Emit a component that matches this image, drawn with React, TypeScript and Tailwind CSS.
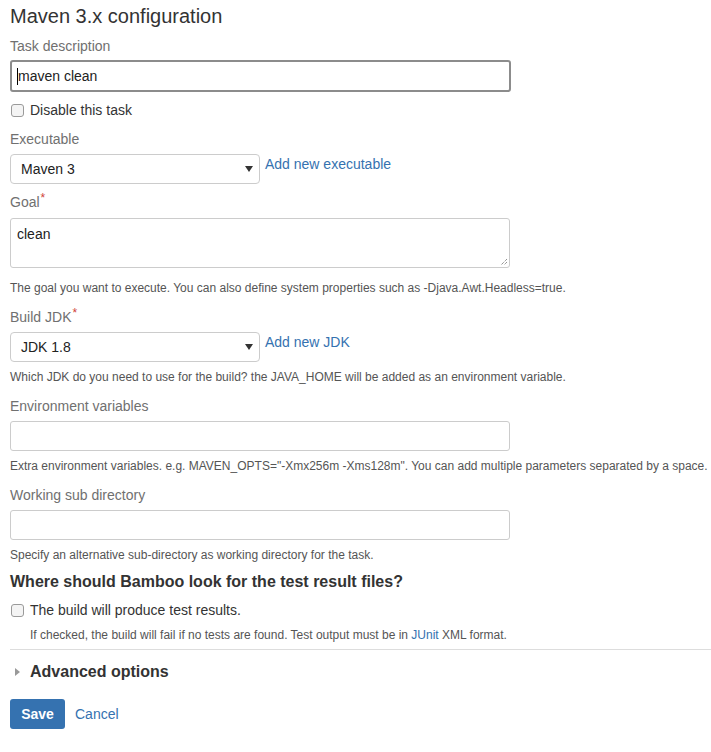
import React from "react";

const FONT = { fontFamily: '"Liberation Sans", Arial, Helvetica, sans-serif' };

const Label = ({ text, required, className = "" }: { text: string; required?: boolean; className?: string }) => (
  <div className={`h-5 text-[14px] leading-5 text-[#707070] ${className}`}>
    {text}
    {required && <span className="relative -top-[5px] ml-[1px] text-[12px] text-[#d04437]">*</span>}
  </div>
);

const Help = ({ children, className = "" }: { children: React.ReactNode; className?: string }) => (
  <div className={`h-4 text-[12px] leading-4 text-[#555] ${className}`}>{children}</div>
);

const Box = ({ className = "", children }: { className?: string; children?: React.ReactNode }) => (
  <div className={`w-[500px] rounded-[3px] border border-[#ccc] bg-white ${className}`}>{children}</div>
);

const Select = ({ value, link }: { value: string; link: string }) => (
  <div className="flex items-start">
    <div className="flex h-[30px] w-[250px] items-center justify-between rounded-[4px] border border-[#ccc] bg-white pl-[10px] pr-[6px] text-[14px] text-[#222]">
      <span>{value}</span>
      <svg width="8" height="6" viewBox="0 0 8 6">
        <path d="M0 0 L8 0 L4 6 Z" fill="#333" />
      </svg>
    </div>
    <a className="ml-[5px] text-[14px] leading-5 text-[#3572b0]">{link}</a>
  </div>
);

const Checkbox = ({ text, className = "" }: { text: string; className?: string }) => (
  <div className={`flex h-5 items-center text-[14px] text-[#333] ${className}`}>
    <span className="ml-[1px] h-[13px] w-[13px] rounded-[3px] border border-[#9a9a9a] bg-[#f4f4f4]" />
    <span className="ml-[6px]">{text}</span>
  </div>
);

export default function App() {
  return (
    <div className="min-h-[752px] w-[711px] bg-white pl-[10px]" style={FONT}>
      <h1 className="pt-1 text-[20px] leading-6 text-[#333]">Maven 3.x configuration</h1>

      <Label text="Task description" className="mt-2" />
      <div className="mt-1 flex h-[32px] w-[501px] items-center rounded-[3px] border-2 border-[#8c8c8c] pl-[5px] text-[14px] text-[#222]">
        <span className="h-[17px] w-[1px] bg-black" />
        <span>maven clean</span>
      </div>
      <Checkbox text="Disable this task" className="mt-[8px]" />

      <Label text="Executable" className="mt-[9px]" />
      <div className="mt-[5px]">
        <Select value="Maven 3" link="Add new executable" />
      </div>

      <Label text="Goal" required className="mt-[8px]" />
      <Box className="relative mt-[6px] h-[50px] pl-[6px] pt-[5px] text-[14px] leading-5 text-[#222]">
        clean
        <svg className="absolute bottom-[1px] right-[1px]" width="9" height="9" viewBox="0 0 9 9">
          <path d="M8 2 L2 8 M8 5 L5 8" stroke="#666" strokeWidth="1" strokeDasharray="1 1" />
        </svg>
      </Box>
      <Help className="mt-[12px]">
        The goal you want to execute. You can also define system properties such as -Djava.Awt.Headless=true.
      </Help>

      <Label text="Build JDK" required className="mt-[11px]" />
      <div className="mt-[5px]">
        <Select value="JDK 1.8" link="Add new JDK" />
      </div>
      <Help className="mt-[7px]">
        Which JDK do you need to use for the build? the JAVA_HOME will be added as an environment variable.
      </Help>

      <Label text="Environment variables" className="mt-[11px]" />
      <Box className="mt-[5px] h-[30px]" />
      <Help className="mt-[7px]">
        Extra environment variables. e.g. MAVEN_OPTS="-Xmx256m -Xms128m". You can add multiple parameters separated by a space.
      </Help>

      <Label text="Working sub directory" className="mt-[11px]" />
      <Box className="mt-[5px] h-[30px]" />
      <Help className="mt-[7px]">Specify an alternative sub-directory as working directory for the task.</Help>

      <h2 className="mt-[7px] text-[16px] font-bold leading-6 text-[#333]">
        Where should Bamboo look for the test result files?
      </h2>
      <Checkbox text="The build will produce test results." className="mt-[6px]" />
      <Help className="ml-[20px] mt-[7px]">
        If checked, the build will fail if no tests are found. Test output must be in{" "}
        <a className="text-[#3572b0]">JUnit</a> XML format.
      </Help>

      <div className="mt-[6px] border-t border-[#ddd]" />

      <div className="mt-[10px] flex h-6 items-center">
        <svg className="ml-[5px]" width="5" height="8" viewBox="0 0 5 8">
          <path d="M0 0 L5 4 L0 8 Z" fill="#999" />
        </svg>
        <span className="ml-[10px] text-[16px] font-bold text-[#333]">Advanced options</span>
      </div>

      <div className="mt-[15px] flex items-center">
        <button className="h-[30px] w-[55px] rounded-[3px] bg-[#3572b0] text-[14px] font-bold text-white">Save</button>
        <a className="ml-[10px] text-[14px] text-[#3572b0]">Cancel</a>
      </div>
    </div>
  );
}
